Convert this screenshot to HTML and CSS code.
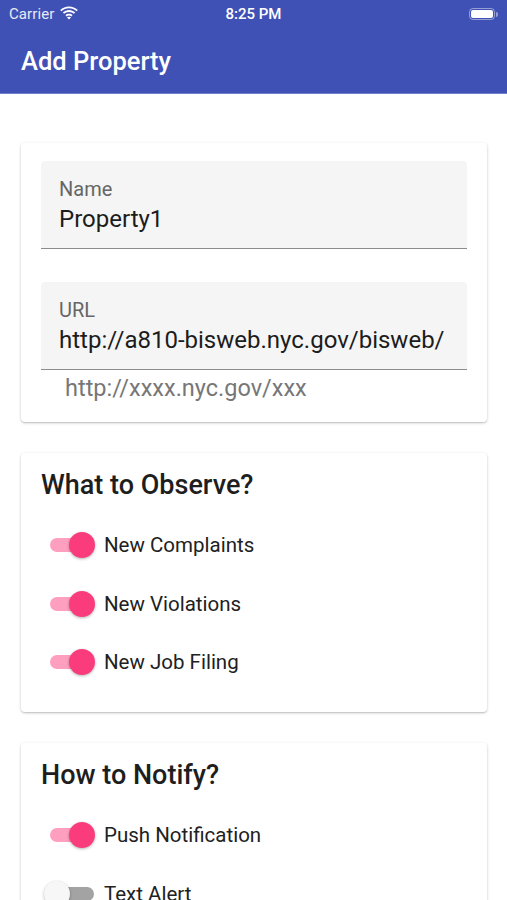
FILE: index.html
```html
<!DOCTYPE html>
<html lang="en">
<head>
<meta charset="utf-8">
<title>Add Property</title>
<link rel="stylesheet" href="styles.css">
</head>
<body>
<div class="appbar">
  <div class="status">
    <div class="status-left">
      <span class="carrier">Carrier</span>
      <svg class="wifi" width="18" height="14" viewBox="0 0 18 14">
        <path d="M9 2.2c2.9 0 5.6 1.1 7.6 3l1.2-1.3C15.4 1.7 12.3.4 9 .4S2.6 1.7.2 3.9l1.2 1.3c2-1.9 4.7-3 7.6-3z" fill="#fff"/>
        <path d="M9 5.9c1.9 0 3.6.7 4.9 1.9l1.3-1.3C13.5 5 11.3 4.1 9 4.1S4.5 5 2.8 6.5l1.3 1.3C5.4 6.6 7.1 5.9 9 5.9z" fill="#fff"/>
        <path d="M9 9.5c.9 0 1.7.3 2.3.9l1.3-1.3C11.6 8.2 10.4 7.7 9 7.7s-2.6.5-3.6 1.4l1.3 1.3c.6-.6 1.4-.9 2.3-.9z" fill="#fff"/>
        <path d="M9 13.6l2-2c-.5-.5-1.2-.8-2-.8s-1.5.3-2 .8z" fill="#fff"/>
      </svg>
    </div>
    <span class="time">8:25 PM</span>
    <div class="status-right">
      <span class="battery"><span class="battery-fill"></span></span><span class="battery-tip"></span>
    </div>
  </div>
  <div class="toolbar">
    <h1 class="title">Add Property</h1>
  </div>
</div>

<main class="content">
  <section class="card card-fields">
    <div class="field">
      <div class="field-label">Name</div>
      <div class="field-value">Property1</div>
    </div>
    <div class="field field-url">
      <div class="field-label">URL</div>
      <div class="field-value">http://a810-bisweb.nyc.gov/bisweb/</div>
    </div>
    <div class="helper">http://xxxx.nyc.gov/xxx</div>
  </section>

  <section class="card card-switches">
    <h2 class="card-title">What to Observe?</h2>
    <div class="row"><span class="switch on"><span class="track"></span><span class="thumb"></span></span><span class="row-label">New Complaints</span></div>
    <div class="row"><span class="switch on"><span class="track"></span><span class="thumb"></span></span><span class="row-label">New Violations</span></div>
    <div class="row"><span class="switch on"><span class="track"></span><span class="thumb"></span></span><span class="row-label">New Job Filing</span></div>
  </section>

  <section class="card card-switches">
    <h2 class="card-title">How to Notify?</h2>
    <div class="row"><span class="switch on"><span class="track"></span><span class="thumb"></span></span><span class="row-label">Push Notification</span></div>
    <div class="row"><span class="switch off"><span class="track"></span><span class="thumb"></span></span><span class="row-label">Text Alert</span></div>
  </section>
</main>
</body>
</html>
```

FILE: styles.css
```css
* { box-sizing: border-box; }

html, body {
  margin: 0;
  padding: 0;
  background: #ffffff;
  font-family: Roboto, "Noto Sans", "Liberation Sans", sans-serif;
  color: #212121;
  overflow: hidden;
  height: 900px;
}

.appbar {
  background: #3f51b5;
  border-bottom: 1px solid #7181cf;
}

.status {
  height: 28px;
  display: grid;
  grid-template-columns: 1fr auto 1fr;
  align-items: center;
  padding: 0 9px 0 9px;
  color: #ffffff;
}

.status-left {
  display: flex;
  align-items: center;
  gap: 6px;
}

.carrier {
  font-size: 15px;
  letter-spacing: 0.1px;
  color: #e8eaf6;
}

.wifi { display: block; margin-top: -2px; }

.time {
  font-size: 15px;
  font-weight: 500;
  text-align: center;
}

.status-right {
  display: flex;
  justify-content: flex-end;
  align-items: center;
}

.battery {
  width: 26px;
  height: 12px;
  border: 1px solid rgba(255,255,255,0.45);
  border-radius: 4px;
  padding: 1px;
  display: flex;
}

.battery-fill {
  flex: 1;
  background: #ffffff;
  border-radius: 2px;
}

.battery-tip {
  width: 2px;
  height: 5px;
  margin-left: 1px;
  background: rgba(255,255,255,0.45);
  border-radius: 0 2px 2px 0;
}

.toolbar {
  height: 65px;
  display: flex;
  align-items: center;
  padding-left: 21px;
}

.title {
  margin: 0;
  color: #ffffff;
  font-size: 25.5px;
  font-weight: 500;
  letter-spacing: 0;
}

.content {
  padding: 49px 20px 0 21px;
  display: flex;
  flex-direction: column;
  gap: 31px;
}

.card {
  background: #ffffff;
  border-radius: 4px;
  box-shadow: 0 1px 3px rgba(0,0,0,0.22), 0 1px 1px rgba(0,0,0,0.08);
}

.card-fields {
  padding: 18px 20px 20px 20px;
}

.field {
  background: #f5f5f5;
  border-radius: 4px 4px 0 0;
  border-bottom: 1px solid #8c8c8c;
  padding: 17px 18px 15px 18px;
}

.field-url {
  margin-top: 33px;
}

.field-label {
  font-size: 20px;
  line-height: 22px;
  color: #666666;
}

.field-value {
  margin-top: 5px;
  font-size: 24px;
  line-height: 28px;
  color: #1c1c1c;
  white-space: nowrap;
}

.helper {
  margin-top: 4px;
  padding-left: 24px;
  font-size: 23.5px;
  line-height: 28px;
  color: #777777;
}

.card-switches {
  padding: 16px 20px 20.5px 20px;
}

.card-title {
  margin: 0 0 15px 0;
  font-size: 27px;
  line-height: 32px;
  font-weight: 500;
  color: #1e1e1e;
}

.row {
  height: 58.5px;
  display: flex;
  align-items: center;
}

.switch {
  position: relative;
  width: 51px;
  height: 26px;
  margin-left: 3px;
  flex: none;
}

.track {
  position: absolute;
  left: 6px;
  top: 6px;
  width: 44px;
  height: 14px;
  border-radius: 7px;
}

.thumb {
  position: absolute;
  top: 0;
  width: 26px;
  height: 26px;
  border-radius: 50%;
  box-shadow: 0 1px 3px rgba(0,0,0,0.3);
}

.switch.on .track { background: #ff9fc0; }
.switch.on .thumb { left: 25px; background: #fb3c7c; }

.switch.off .track { background: #a3a3a3; }
.switch.off .thumb { left: 0; background: #f7f7f7; }

.row-label {
  margin-left: 9px;
  font-size: 20.5px;
  color: #212121;
}
```
